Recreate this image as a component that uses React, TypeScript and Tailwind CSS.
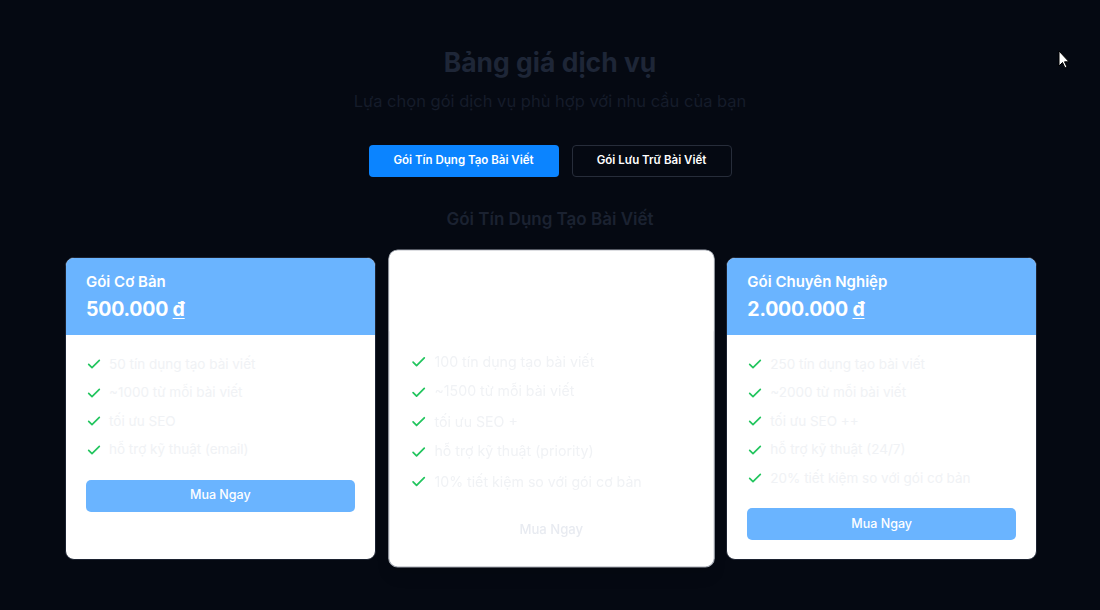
import React from "react";

const font = { fontFamily: "Inter, 'Noto Sans', 'Liberation Sans', sans-serif" };

function Check() {
  return (
    <svg width="16" height="16" viewBox="0 0 24 24" fill="none" stroke="#22c55e" strokeWidth="2.5" strokeLinecap="round" strokeLinejoin="round" className="shrink-0">
      <path d="M4 12.5l5 5L20 6.5" />
    </svg>
  );
}

type Plan = { name: string; price: string; features: string[]; popular?: boolean };

const plans: Plan[] = [
  {
    name: "Gói Cơ Bản",
    price: "500.000",
    features: ["50 tín dụng tạo bài viết", "~1000 từ mỗi bài viết", "tối ưu SEO", "hỗ trợ kỹ thuật (email)"],
  },
  {
    name: "Gói Phổ Biến",
    price: "1.000.000",
    popular: true,
    features: [
      "100 tín dụng tạo bài viết",
      "~1500 từ mỗi bài viết",
      "tối ưu SEO +",
      "hỗ trợ kỹ thuật (priority)",
      "10% tiết kiệm so với gói cơ bản",
    ],
  },
  {
    name: "Gói Chuyên Nghiệp",
    price: "2.000.000",
    features: [
      "250 tín dụng tạo bài viết",
      "~2000 từ mỗi bài viết",
      "tối ưu SEO ++",
      "hỗ trợ kỹ thuật (24/7)",
      "20% tiết kiệm so với gói cơ bản",
    ],
  },
];

function Card({ p }: { p: Plan }) {
  return (
    <div
      className={
        "flex flex-col overflow-hidden rounded-[9px] bg-white " +
        (p.popular ? "scale-[1.05] border border-[#a3a8b1] shadow-lg" : "border border-[#1c2230]")
      }
    >
      <div className={"px-5 pt-[13px] pb-[12px] " + (p.popular ? "bg-white" : "bg-[#6ab4ff]")}>
        <div className="text-[15px] font-semibold leading-[22px] text-white">{p.name}</div>
        <div className="mt-[2px] text-[19.5px] font-bold leading-[28px] tracking-[-0.2px] text-white">
          {p.price} <span className="underline underline-offset-2">đ</span>
        </div>
      </div>
      <div className="flex flex-1 flex-col px-5 pt-[19px] pb-[19px]">
        <ul className="flex flex-col gap-[8.5px]">
          {p.features.map((f) => (
            <li key={f} className="flex h-5 items-center gap-[7px] text-[13.5px] text-[#f0f2f5]">
              <Check />
              <span>{f}</span>
            </li>
          ))}
        </ul>
        <button
          className={
            "mt-5 h-8 w-full rounded-[5px] text-[12.5px] font-medium " +
            (p.popular ? "bg-white text-[#e8ebf1]" : "bg-[#6ab4ff] text-white")
          }
        >
          Mua Ngay
        </button>
      </div>
    </div>
  );
}

export default function App() {
  return (
    <div style={font} className="relative h-[610px] w-[1100px] overflow-hidden bg-[#050912]">
      <div className="flex flex-col items-center pt-[45px]">
        <h1 className="text-[26.5px] font-bold leading-[34px] text-[#1e2637]">Bảng giá dịch vụ</h1>
        <p className="mt-[10px] text-[16.5px] leading-[24px] text-[#151c2a]">
          Lựa chọn gói dịch vụ phù hợp với nhu cầu của bạn
        </p>
        <div className="mt-[32px] flex gap-[13px]">
          <button className="h-8 w-[190px] rounded-[4px] bg-[#0b84ff] text-[11.5px] font-semibold text-white">
            Gói Tín Dụng Tạo Bài Viết
          </button>
          <button className="h-8 w-[160px] rounded-[4px] border border-[#272d3a] bg-transparent text-[11.5px] font-semibold text-white">
            Gói Lưu Trữ Bài Viết
          </button>
        </div>
        <h2 className="mt-[30px] text-[17px] font-semibold leading-[24px] text-[#1b2231]">Gói Tín Dụng Tạo Bài Viết</h2>
        <div className="mt-[26px] grid w-[972px] translate-x-[1px] grid-cols-3 items-stretch gap-[20px]">
          {plans.map((p) => (
            <Card key={p.name} p={p} />
          ))}
        </div>
      </div>
      <svg className="absolute left-[1058px] top-[50px]" width="12" height="19" viewBox="0 0 12 19">
        <path d="M1 1v15l3.5-3.5 2.5 5.5 2-1-2.5-5.2H11z" fill="#fff" stroke="#000" strokeWidth="1" />
      </svg>
    </div>
  );
}
